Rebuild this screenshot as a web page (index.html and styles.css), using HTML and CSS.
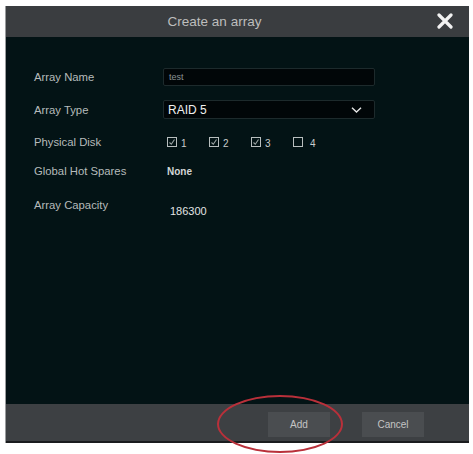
FILE: index.html
```html
<!DOCTYPE html>
<html>
<head>
<meta charset="utf-8">
<link rel="stylesheet" href="styles.css">
</head>
<body>
<div class="page">
  <div class="dialog">
    <div class="titlebar">
      <span class="title">Create an array</span>
      <svg class="close" width="16" height="16" viewBox="0 0 16 16"><path d="M2 2L14 14M14 2L2 14" stroke="#f2f2f2" stroke-width="3.2" stroke-linecap="round"/></svg>
    </div>
    <div class="content">
      <div class="row r1">
        <span class="label">Array Name</span>
        <div class="input"><span class="input-text">test</span></div>
      </div>
      <div class="row r2">
        <span class="label">Array Type</span>
        <div class="select"><span class="select-text">RAID 5</span>
          <svg class="chev" width="11" height="6" viewBox="0 0 11 6"><path d="M1 0.8L5.5 5L10 0.8" stroke="#e6e6e6" stroke-width="1.4" fill="none"/></svg>
        </div>
      </div>
      <div class="row r3">
        <span class="label">Physical Disk</span>
        <div class="disks">
          <span class="disk"><span class="box checked"><svg width="8" height="8" viewBox="0 0 8 8"><path d="M1.5 4.5L3.3 6.2L6.5 1.5" stroke="#9aa3a3" stroke-width="1.1" fill="none"/></svg></span><span class="num">1</span></span>
          <span class="disk"><span class="box checked"><svg width="8" height="8" viewBox="0 0 8 8"><path d="M1.5 4.5L3.3 6.2L6.5 1.5" stroke="#9aa3a3" stroke-width="1.1" fill="none"/></svg></span><span class="num">2</span></span>
          <span class="disk"><span class="box checked"><svg width="8" height="8" viewBox="0 0 8 8"><path d="M1.5 4.5L3.3 6.2L6.5 1.5" stroke="#9aa3a3" stroke-width="1.1" fill="none"/></svg></span><span class="num">3</span></span>
          <span class="disk"><span class="box"></span><span class="num">4</span></span>
        </div>
      </div>
      <div class="row r4">
        <span class="label">Global Hot Spares</span>
        <span class="value none">None</span>
      </div>
      <div class="row r5">
        <span class="label">Array Capacity</span>
        <span class="value cap">186300</span>
      </div>
    </div>
    <div class="footer">
      <div class="btn">Add</div>
      <div class="btn">Cancel</div>
    </div>
  </div>
  <div class="highlight"></div>
</div>
</body>
</html>
```

FILE: styles.css
```css
html, body {
  margin: 0;
  padding: 0;
  background: #ffffff;
}
body {
  font-family: "Liberation Sans", Arial, sans-serif;
  width: 473px;
  height: 454px;
  overflow: hidden;
}
.page {
  position: relative;
  padding: 6px 0 0 5px;
}
.dialog {
  width: 464px;
  display: flex;
  flex-direction: column;
  border-left: 1px solid #9a9c9e;
  box-sizing: border-box;
}
.titlebar {
  height: 31px;
  background: #3a3d40;
  display: flex;
  align-items: center;
  justify-content: center;
  position: relative;
}
.title {
  color: #bdbdbd;
  font-size: 13.5px;
  margin-left: -46px;
}
.close {
  position: absolute;
  right: 16px;
  top: 7px;
}
.content {
  height: 367px;
  background: #031315;
  box-sizing: border-box;
  padding: 31px 0 0 28px;
  display: flex;
  flex-direction: column;
}
.row {
  display: grid;
  grid-template-columns: 129px 212px;
  align-items: center;
}
.r1 { height: 18px; }
.r2 { height: 19px; margin-top: 14px; }
.r3 { height: 16px; margin-top: 15px; }
.r4 { height: 16px; margin-top: 13px; }
.r5 { height: 16px; margin-top: 22px; }
.label {
  color: #b6bbbb;
  font-size: 11.3px;
}
.r5 .label { position: relative; top: -4px; }
.input {
  height: 18px;
  background: #010608;
  border: 1px solid #1d2a2c;
  border-radius: 2px;
  box-sizing: border-box;
  display: flex;
  align-items: center;
  padding-left: 5px;
}
.input-text {
  color: #8a9294;
  font-size: 9px;
}
.select {
  height: 19px;
  background: #010608;
  border: 1px solid #1d2a2c;
  border-radius: 2px;
  box-sizing: border-box;
  display: flex;
  align-items: center;
  justify-content: space-between;
  padding: 0 12px 0 4px;
}
.select-text {
  color: #f0f0f0;
  font-size: 12px;
}
.disks {
  display: flex;
  align-items: center;
  padding-left: 4px;
}
.disk {
  display: flex;
  align-items: center;
  width: 42px;
}
.box {
  width: 10px;
  height: 10px;
  border: 1px solid #b8bebe;
  box-sizing: border-box;
  display: flex;
  align-items: center;
  justify-content: center;
}
.num {
  color: #c9cccc;
  font-size: 10px;
  margin-left: 4px;
  position: relative;
  top: 1px;
}
.disk:nth-child(4) .num { margin-left: 7px; }
.value {
  color: #e2e4e4;
}
.none {
  font-size: 10px;
  font-weight: bold;
  color: #d4d7d7;
  padding-left: 4px;
}
.cap {
  font-size: 11px;
  padding-left: 7px;
  position: relative;
  top: 2px;
}
.footer {
  height: 39px;
  background: #3d4043;
  border-bottom: 2px solid #1a1c1e;
  box-sizing: border-box;
  display: flex;
  align-items: center;
  justify-content: flex-end;
  gap: 32px;
  padding: 0 45px 0 0;
}
.btn {
  width: 62px;
  height: 25px;
  background: #4a4d50;
  color: #c4c4c4;
  font-size: 10px;
  display: flex;
  align-items: center;
  justify-content: center;
  margin-top: 4px;
}
.highlight {
  position: absolute;
  left: 217px;
  top: 395px;
  width: 126px;
  height: 58px;
  border: 2.5px solid #b9303a;
  border-radius: 50%;
  box-sizing: border-box;
  filter: blur(0.4px);
}
```
